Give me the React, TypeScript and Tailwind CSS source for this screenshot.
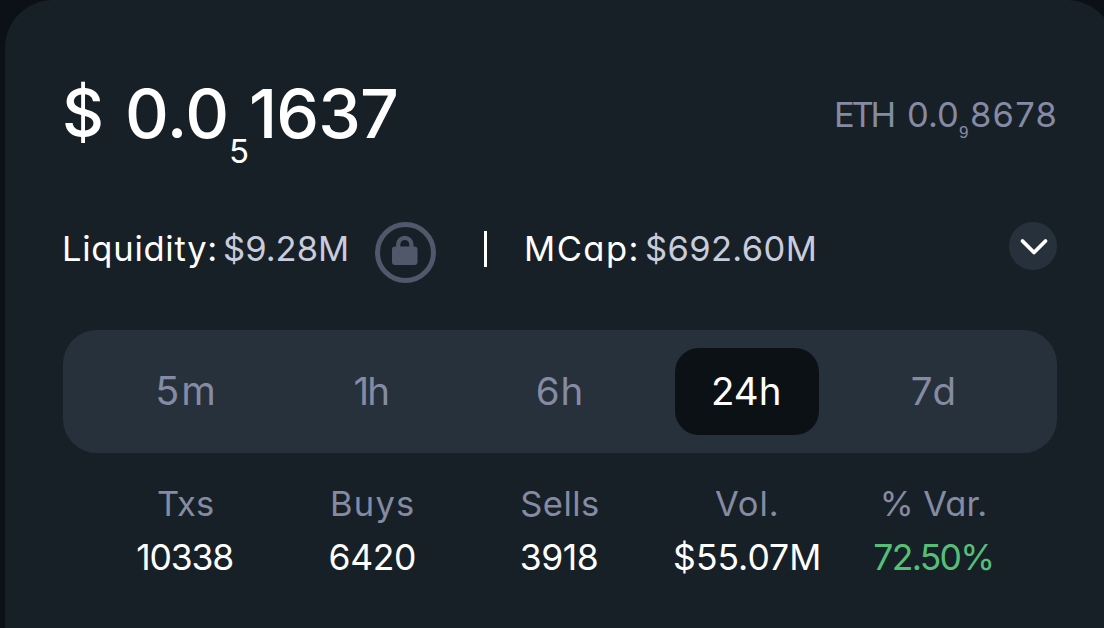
import React from "react";

const stats = [
  { period: "5m", label: "Txs", value: "10338", periodClass: "tracking-[2px] pl-0.5 text-[39.5px]", labelClass: "", valueClass: "tracking-[-1.2px] pr-0.5" },
  { period: "1h", label: "Buys", value: "6420", periodClass: "tracking-[-2px] pr-1 text-[38.5px]", labelClass: "tracking-[1.2px]", valueClass: "tracking-[-0.4px] pr-px" },
  { period: "6h", label: "Sells", value: "3918", periodClass: "tracking-[1px] text-[38.5px]", labelClass: "tracking-[0.5px]", valueClass: "tracking-[-0.5px] pr-0.5" },
  { period: "24h", label: "Vol.", value: "$55.07M", active: true, periodClass: "pr-0.5 text-[38.5px]", labelClass: "tracking-[0.9px]", valueClass: "" },
  { period: "7d", label: "% Var.", value: "72.50%", positive: true, periodClass: "tracking-[2px] text-[38.5px]", labelClass: "pr-0.5", valueClass: "tracking-[-1.7px] pr-0.5" },
];

function PriceRow() {
  return (
    <div className="flex h-20 items-center justify-between whitespace-nowrap">
      <div className="flex items-center text-[68px] leading-[80px] font-medium text-white">
        <span className="-ml-px w-[63px] text-[65px]">$</span>
        <span className="w-[104px] tracking-[-0.3px]">0.0</span>
        <span className="w-[20px] pt-[75px] text-[33px] leading-[80px] font-normal">5</span>
        <span className="tracking-[-0.9px]">1637</span>
      </div>
      <div className="flex items-center pt-[3px] text-[34.5px] leading-10 text-[#848ba3]">
        <span className="-ml-px w-[73px] tracking-[-3.3px]">ETH</span>
        <span className="w-[52px]">0.0</span>
        <span className="w-[11px] pt-[37px] font-['Liberation_Sans'] text-[17px] leading-10">9</span>
        <span className="-mr-px tracking-[1.2px]">8678</span>
      </div>
    </div>
  );
}

function LockBadge() {
  return (
    <svg className="h-[61px] w-[61px]" viewBox="0 0 61 61" fill="none">
      <circle cx="30.5" cy="30.5" r="28" stroke="#50586b" strokeWidth="5" />
      <rect x="17" y="24.5" width="25.5" height="18.5" rx="3" fill="#50586b" />
      <path d="M23.2 25.5v-3a6.6 6.6 0 0 1 13.2 0v3" stroke="#50586b" strokeWidth="4.2" />
    </svg>
  );
}

function MarketRow() {
  return (
    <div className="mt-[69px] flex h-[61px] items-start whitespace-nowrap text-[34.5px] leading-[53px] text-white">
      <span className="-ml-px w-[161px] tracking-[0.75px]">Liquidity:</span>
      <span className="w-[152px] text-[#c8ccdc]">$9.28M</span>
      <LockBadge />
      <div className="mt-[9px] ml-12 h-9 w-[3px] bg-white" />
      <span className="ml-[37px] w-[121px] tracking-[1.5px]">MCap:</span>
      <span className="tracking-[0.35px] text-[#c8ccdc]">$692.60M</span>
      <button className="ml-auto flex h-12 w-12 items-center justify-center rounded-full bg-[#27313b]">
        <svg className="h-12 w-12" viewBox="0 0 48 48" fill="none">
          <path d="M13.5 19 25 30.5 36.5 19" stroke="white" strokeWidth="3.8" strokeLinecap="round" strokeLinejoin="round" />
        </svg>
      </button>
    </div>
  );
}

export default function App() {
  return (
    <main className="h-[628px] w-[1104px] overflow-hidden bg-[#0b1116] pl-[5px] font-['Inter',sans-serif] [font-feature-settings:'cv11']">
      <section className="h-[700px] w-[1110px] rounded-[48px] bg-[#182027] px-[58px] pt-[73px]">
        <PriceRow />
        <MarketRow />
        <div className="mt-[47px] grid h-[123px] grid-cols-5 items-center justify-items-center rounded-[34px] bg-[#27313b] px-[29px]">
          {stats.map((item) => (
            <button
              key={item.period}
              className={`h-[87px] w-36 rounded-[24px] leading-[87px] ${item.periodClass} ${
                item.active ? "bg-[#0c1116] text-white" : "text-[#848ba3]"
              }`}
            >
              {item.period}
            </button>
          ))}
        </div>
        <div className="mt-6 grid grid-cols-5 px-[29px] text-center whitespace-nowrap">
          {stats.map((item) => (
            <div key={item.label} className="flex flex-col items-center">
              <span className={`text-[34.5px] leading-[54px] text-[#848ba3] ${item.labelClass}`}>{item.label}</span>
              <span
                className={`text-[35.5px] leading-[54px] ${item.valueClass} ${
                  item.positive ? "text-[#56bf77]" : "text-white"
                }`}
              >
                {item.value}
              </span>
            </div>
          ))}
        </div>
      </section>
    </main>
  );
}
